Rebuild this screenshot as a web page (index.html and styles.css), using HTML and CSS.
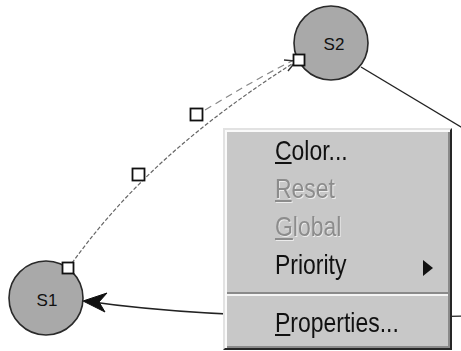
FILE: index.html
```html
<!DOCTYPE html>
<html lang="en">
<head>
  <meta charset="UTF-8" />
  <title>State Diagram</title>
  <link rel="stylesheet" href="styles.css">
</head>
<body>
  <div class="canvas">
    <svg class="diagram" width="461" height="351" viewBox="0 0 461 351">
      <!-- transition S1 -> S2 (selected, dashed) -->
      <path class="trans-sel" d="M72,263 C112,208 172,140 295,62" />
      <path class="trans-sel2" d="M205,110 C235,92 262,76 292,61" />
      <polyline class="arrow-open" points="284,60 296,61 288,71" />

      <!-- transition S2 -> off canvas -->
      <path class="trans" d="M361,67 L466,130" />

      <!-- transition off canvas -> S1 -->
      <path class="trans" d="M85,301 Q230,322 466,316" />
      <polygon class="arrow-fill" points="83,301 107,293 99,302 105,312" />

      <!-- states -->
      <circle class="state" cx="331" cy="43" r="37" />
      <text class="state-label" x="334" y="50">S2</text>
      <circle class="state" cx="46" cy="298" r="37" />
      <text class="state-label" x="47" y="306">S1</text>

      <!-- handles -->
      <rect class="handle" x="62.5" y="262.5" width="11" height="11" />
      <rect class="handle" x="132.5" y="168.5" width="12" height="12" />
      <rect class="handle" x="190.5" y="108.5" width="12" height="12" />
      <rect class="handle" x="293.5" y="54.5" width="11" height="11" />
    </svg>

    <div class="menu">
      <div class="item"><span><u>C</u>olor...</span></div>
      <div class="item disabled"><span><u>R</u>eset</span></div>
      <div class="item disabled"><span><u>G</u>lobal</span></div>
      <div class="item"><span>Priority</span><i class="sub"></i></div>
      <div class="sep"></div>
      <div class="item"><span><u>P</u>roperties...</span></div>
    </div>
  </div>
</body>
</html>
```

FILE: styles.css
```css
body { margin: 0; background: #fff; }
.canvas { position: relative; width: 461px; height: 351px; overflow: hidden; background: #fff; }
.diagram { position: absolute; left: 0; top: 0; }

.state { fill: #a9a9a9; stroke: #2a2a2a; stroke-width: 1.6; }
.state-label { font-family: "Liberation Sans", sans-serif; font-size: 17px; fill: #111; text-anchor: middle; }
.handle { fill: #fff; stroke: #111; stroke-width: 1.8; }
.trans { fill: none; stroke: #222; stroke-width: 1.4; }
.trans-sel { fill: none; stroke: #666; stroke-width: 1.2; stroke-dasharray: 4 2; }
.trans-sel2 { fill: none; stroke: #888; stroke-width: 1.2; stroke-dasharray: 7 5; }
.arrow-open { fill: none; stroke: #333; stroke-width: 1.4; }
.arrow-fill { fill: #111; stroke: #111; stroke-width: 1; }

.menu {
  position: absolute; left: 223px; top: 128px; width: 229px; height: 222px;
  box-sizing: border-box; padding: 2px 2px 4px;
  background: #c8c8c8;
  border: 2px solid; border-color: #e2e2e2 #262626 #262626 #e2e2e2;
  box-shadow: inset 2px 2px 0 #fafafa, inset -2px -2px 0 #8a8a8a;
  font-family: "Liberation Sans", sans-serif;
  font-size: 28px; color: #111;
}
.item { display: flex; align-items: center; justify-content: space-between; height: 38px; line-height: 38px; padding: 0 15px 0 48px; }
/* the old menu font is tall and narrow */
.item span { display: inline-block; transform: scaleX(0.82); transform-origin: left center; }
.item u { text-decoration-thickness: 2px; text-underline-offset: 2px; }
.item.disabled { color: #8c8c8c; text-shadow: 1px 1px 0 #ececec; }
.sub { display: block; width: 0; height: 0; margin-top: 5px; border-left: 10px solid #111; border-top: 8px solid transparent; border-bottom: 8px solid transparent; }
.sep { height: 20px; display: flex; flex-direction: column; justify-content: center; }
.sep::before { content: ""; display: block; height: 2px; background: #8a8a8a; }
.sep::after { content: ""; display: block; height: 2px; background: #f4f4f4; }
```
